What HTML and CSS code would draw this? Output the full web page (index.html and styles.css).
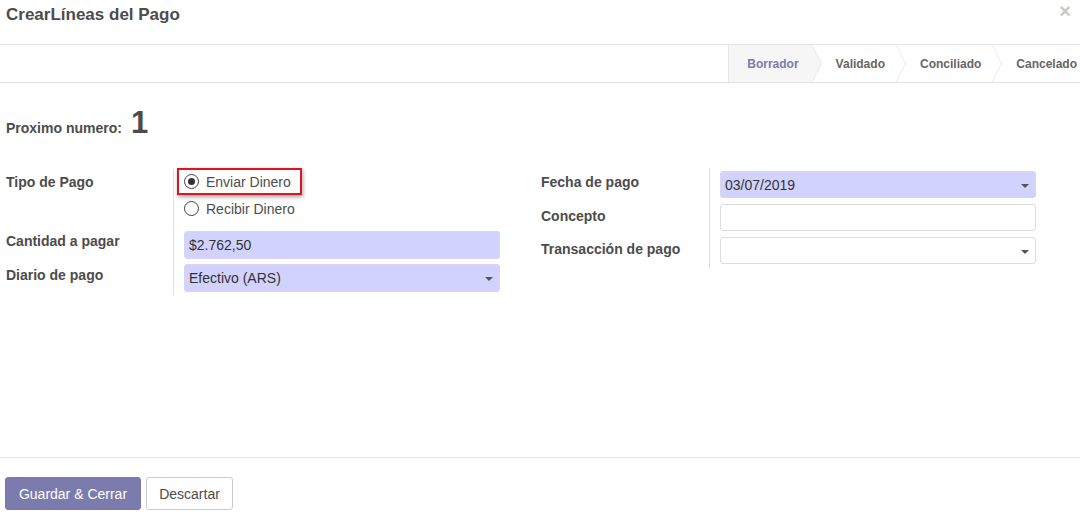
FILE: index.html
```html
<!DOCTYPE html>
<html lang="es">
<head>
<meta charset="utf-8">
<title>CrearLíneas del Pago</title>
<link rel="stylesheet" href="styles.css">
</head>
<body>
<div class="modal">
  <header class="modal-header">
    <h4 class="modal-title">CrearLíneas del Pago</h4>
    <span class="close">×</span>
  </header>
  <div class="statusbar">
    <div class="steps">
      <span class="step active">Borrador</span>
      <span class="step">Validado</span>
      <span class="step">Conciliado</span>
      <span class="step last">Cancelado</span>
    </div>
  </div>
  <main class="sheet">
    <div class="number"><span class="number-label">Proximo numero:</span><span class="number-value">1</span></div>
    <div class="groups">
      <div class="group left">
        <div class="labels">
          <div class="lbl lbl-radio">Tipo de Pago</div>
          <div class="lbl lbl-amount">Cantidad a pagar</div>
          <div class="lbl lbl-journal">Diario de pago</div>
        </div>
        <div class="fields">
          <div class="radios">
            <label class="radio highlighted"><span class="dot checked"></span>Enviar Dinero</label>
            <label class="radio"><span class="dot"></span>Recibir Dinero</label>
          </div>
          <div class="input req amount">$2.762,50</div>
          <div class="input req select journal">Efectivo (ARS)<span class="caret"></span></div>
        </div>
      </div>
      <div class="group right">
        <div class="labels">
          <div class="lbl r1">Fecha de pago</div>
          <div class="lbl r2">Concepto</div>
          <div class="lbl r3">Transacción de pago</div>
        </div>
        <div class="fields rfields">
          <div class="input req select">03/07/2019<span class="caret"></span></div>
          <div class="input"></div>
          <div class="input select"><span class="caret"></span></div>
        </div>
      </div>
    </div>
  </main>
  <footer class="modal-footer">
    <button class="btn btn-primary">Guardar &amp; Cerrar</button>
    <button class="btn btn-default">Descartar</button>
  </footer>
</div>
</body>
</html>
```

FILE: styles.css
```css
* { box-sizing: border-box; }
html, body { margin: 0; padding: 0; background: #fff; }
body {
  font-family: "Liberation Sans", Arial, sans-serif;
  font-size: 14px;
  color: #4c4c4c;
  width: 1080px;
  height: 515px;
  overflow: hidden;
}
.modal { display: flex; flex-direction: column; height: 515px; }

.modal-header {
  height: 45px;
  border-bottom: 1px solid #e5e5e5;
  display: flex;
  justify-content: space-between;
  align-items: flex-start;
  padding: 5px 6px 0 6px;
}
.modal-title {
  margin: 0;
  font-size: 17px;
  font-weight: bold;
  color: #4c4c4c;
  line-height: 20px;
}
.close {
  color: #c8c8c8;
  font-size: 20px;
  font-weight: bold;
  line-height: 14px;
  margin-top: -1px;
  margin-right: 3px;
}

.statusbar {
  height: 38px;
  border-bottom: 1px solid #e0e0e0;
  display: flex;
  justify-content: flex-end;
  overflow: hidden;
}
.steps { display: flex; height: 100%; }
.step {
  position: relative;
  display: flex;
  align-items: center;
  height: 100%;
  font-size: 12px;
  font-weight: bold;
  color: #666;
  padding: 0 11px 0 24px;
}
.step.active {
  background: #f6f6f6;
  color: #7c7bad;
  border-left: 1px solid #e5e5e5;
  padding-left: 18px;
  padding-right: 13px;
}
.step::after {
  content: "";
  position: absolute;
  right: -14px;
  top: 4px;
  width: 28px;
  height: 28px;
  border-top: 1px solid #e3e3e3;
  border-right: 1px solid #e3e3e3;
  transform: scaleX(0.5) rotate(45deg);
  transform-origin: center;
  z-index: 1;
}
.step.active::after { background: #f6f6f6; }
.step.last { padding-right: 3px; }
.step.last::after { display: none; }

.sheet { flex: 1; padding: 0 6px; }
.number {
  display: flex;
  align-items: baseline;
  margin-top: 26px;
  height: 30px;
}
.number-label { font-weight: bold; font-size: 14px; color: #4c4c4c; }
.number-value { font-size: 31px; font-weight: bold; margin-left: 9px; color: #4c4c4c; line-height: 28px; }

.groups { display: flex; margin-top: 29px; }
.group { display: flex; }
.group.left { width: 535px; }
.labels { font-weight: bold; color: #4c4c4c; }
.left .labels { width: 168px; border-right: 1px solid #e0e0e0; padding-top: 6px; height: 127px; }
.right .labels { width: 169px; border-right: 1px solid #e0e0e0; padding-top: 6px; height: 100px; }
.lbl { height: 16px; line-height: 16px; }
.lbl-amount { margin-top: 43px; }
.lbl-journal { margin-top: 18px; }
.r2 { margin-top: 18px; }
.r3 { margin-top: 17px; }

.fields { padding-left: 10px; width: 327px; display: flex; flex-direction: column; }
.radios { display: flex; flex-direction: column; margin-top: 0; }
.radio {
  display: flex;
  align-items: center;
  height: 27px;
  color: #4c4c4c;
  width: 125px;
  margin-left: -7px;
  padding-left: 7px;
}
.radio.highlighted {
  border: 2px solid #e0141e;
  box-shadow: 1px 2px 4px rgba(0,0,0,0.35);
  padding-left: 5px;
}
.dot {
  width: 15px;
  height: 15px;
  border: 1px solid #444;
  border-radius: 50%;
  margin-right: 7px;
  display: inline-block;
  position: relative;
  background: #fff;
}
.dot.checked::after {
  content: "";
  position: absolute;
  left: 3px; top: 3px;
  width: 7px; height: 7px;
  border-radius: 50%;
  background: #333;
}
.input {
  height: 28px;
  border: 1px solid #dcdcdc;
  border-radius: 3px;
  padding: 0 4px;
  display: flex;
  align-items: center;
  color: #333;
  position: relative;
  width: 316px;
  flex-shrink: 0;
}
.input.req { background: #d2d2ff; border-color: #d6d6f0; }
.amount { margin-top: 9px; }
.journal { margin-top: 5px; }
.rfields { padding-top: 3px; }
.rfields .input { height: 27px; }
.rfields .input + .input { margin-top: 6px; }
.caret {
  position: absolute;
  right: 6px;
  top: 12px;
  width: 0; height: 0;
  border-left: 4px solid transparent;
  border-right: 4px solid transparent;
  border-top: 4px solid #555;
}

.modal-footer {
  height: 58px;
  border-top: 1px solid #e5e5e5;
  display: flex;
  align-items: flex-start;
  padding: 19px 5px 0 5px;
  gap: 5px;
}
.btn {
  font-family: "Liberation Sans", Arial, sans-serif;
  font-size: 14px;
  height: 33px;
  border-radius: 3px;
  padding: 0 11px;
  cursor: pointer;
}
.btn-primary { background: #7c7bad; color: #fff; border: 1px solid #7c7bad; width: 136px; }
.btn-default { background: #fff; color: #4c4c4c; border: 1px solid #ccc; width: 87px; }
```
